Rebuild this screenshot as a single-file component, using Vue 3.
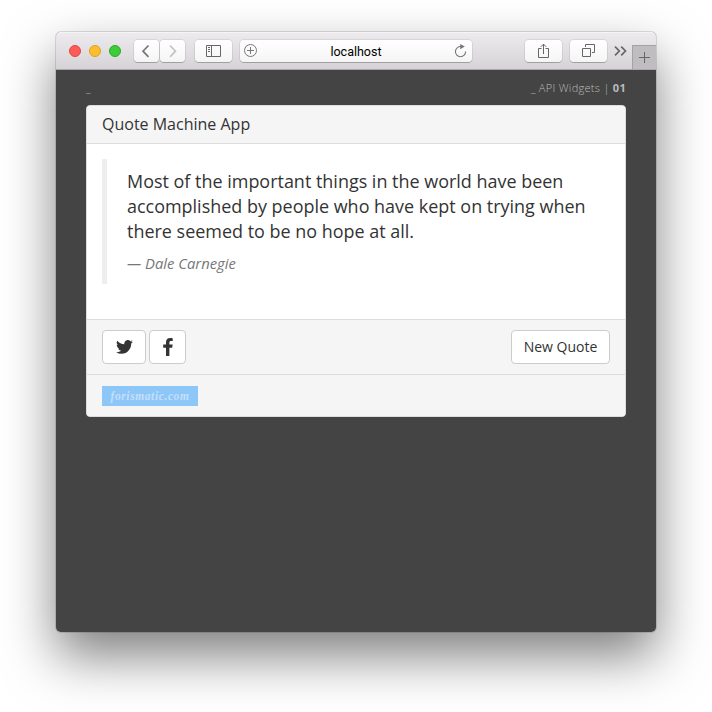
<script setup>
const lights = ['red', 'amber', 'green']
</script>

<template>
  <main class="desktop">
    <section class="window">
      <header class="toolbar">
        <div class="lights">
          <i v-for="c in lights" :key="c" :class="['light', c]"></i>
        </div>
        <div class="nav">
          <button class="tool half left">
            <svg width="25" height="22" viewBox="0 0 25 22"><path d="M14.500 5.500 9 11.200l5.500 5.700" fill="none" stroke="#777" stroke-width="1.700" /></svg>
          </button>
          <button class="tool half right">
            <svg width="25" height="22" viewBox="0 0 25 22"><path d="M10 5.500l5.500 5.700L10 16.900" fill="none" stroke="#c4c4c4" stroke-width="1.700" /></svg>
          </button>
        </div>
        <button class="tool sidebar">
          <svg width="15" height="12" viewBox="0 0 15 12" fill="none" stroke="#666"><path d="M.5.5h14v11H.5zM5.5.5v11M2 2.5h2M2 4.5h2M2 6.5h2" /></svg>
        </button>
        <div class="address">
          <svg width="13" height="13" viewBox="0 0 13 13" fill="none" stroke="#777"><circle cx="6.5" cy="6.5" r="6" /><path d="M3 6.5h7M6.5 3v7" /></svg>
          <span class="host">localhost</span>
          <svg width="13" height="14" viewBox="0 0 13 14" fill="none" stroke="#777" stroke-width="1.1"><path d="M7 2.6A5.1 5.1 0 1 0 11.6 7.5" /><path d="M6.2 0v5.2L10.8 2.6z" fill="#777" stroke="none" /></svg>
        </div>
        <button class="tool share">
          <svg width="11" height="16" viewBox="0 0 11 16" fill="none" stroke="#666"><path d="M3.500 5.500h-3v9h10v-9h-3M5.500 11V1M2.800 3.800 5.500 1.100l2.700 2.700" /></svg>
        </button>
        <button class="tool tabs">
          <svg width="13" height="13" viewBox="0 0 13 13" fill="none" stroke="#666"><path d="M.5 4.500h8v8h-8zM3.500 3V.5h9v8H10" /></svg>
        </button>
        <svg class="more" width="13" height="10" viewBox="0 0 13 10" fill="none" stroke="#666" stroke-width="1.700"><path d="m1 .7 4.300 4.300L1 9.300M7.200.7 11.500 5 7.200 9.300" /></svg>
        <div class="newtab">
          <svg width="11" height="11" viewBox="0 0 11 11" stroke="#666"><path d="M0 5.500h11M5.500 0v11" /></svg>
        </div>
      </header>

      <div class="page">
        <div class="crumbs">
          <span>_</span>
          <span>_ API Widgets | <b>01</b></span>
        </div>
        <article class="card">
          <h1 class="title">Quote Machine App</h1>
          <div class="body">
            <blockquote class="quote">
              <p>Most of the important things in the world have been accomplished by people who have kept on trying when there seemed to be no hope at all.</p>
              <cite>— Dale Carnegie</cite>
            </blockquote>
          </div>
          <div class="actions">
            <button class="btn twitter">
              <svg width="17" height="14" viewBox="0 0 24 20" fill="#333"><path d="M24 2.400a10 10 0 0 1-2.830.780A4.940 4.940 0 0 0 23.340.450a9.900 9.900 0 0 1-3.130 1.190 4.920 4.920 0 0 0-8.380 4.490A14 14 0 0 1 1.670.980a4.920 4.920 0 0 0 1.520 6.570 4.900 4.900 0 0 1-2.230-.610v.060a4.930 4.930 0 0 0 3.950 4.830 5 5 0 0 1-2.220.080 4.930 4.930 0 0 0 4.600 3.420A9.900 9.900 0 0 1 0 17.370a14 14 0 0 0 7.550 2.210c9.050 0 14-7.500 14-14v-.640A10 10 0 0 0 24 2.400z" /></svg>
            </button>
            <button class="btn facebook">
              <svg width="10" height="18" viewBox="0 0 10 18" fill="#333"><path d="M9.700.200v2.900H8c-1.300 0-1.600.600-1.600 1.500v2h3.200l-.400 3.100H6.400V18H3V9.700H.200V6.600H3V4.200C3 1.500 4.700 0 7.200 0c1.200 0 2.200.100 2.500.200z" /></svg>
            </button>
            <button class="btn new">New Quote</button>
          </div>
          <div class="source"><a class="badge">forismatic.com</a></div>
        </article>
      </div>
    </section>
  </main>
</template>

<style>
body {
  margin: 0;
  background: #fff;
}
</style>

<style scoped>
* {
  box-sizing: border-box;
}
.desktop {
  width: 712px;
  height: 712px;
  padding: 32px 56px 80px;
  overflow: hidden;
  background: #fff;
}
.window {
  width: 600px;
  height: 600px;
  border-radius: 5px;
  background: #444;
  box-shadow: 0 0 0 1px rgba(0, 0, 0, 0.12), 0 24px 52px rgba(0, 0, 0, 0.5);
  font-family: "Open Sans", sans-serif;
}
.toolbar {
  height: 38px;
  display: flex;
  align-items: center;
  padding-left: 13px;
  border-radius: 5px 5px 0 0;
  border-bottom: 1px solid #aaa8aa;
  background: linear-gradient(#edebed, #d5d3d5);
  box-shadow: inset 0 1px #f6f5f6;
}
.lights {
  display: flex;
  gap: 8px;
  margin-right: 13px;
}
.light {
  width: 12px;
  height: 12px;
  border-radius: 50%;
  border: 1px solid;
}
.red { background: #fc5b57; border-color: #e2463f; }
.amber { background: #fdbe2d; border-color: #dfa023; }
.green { background: #3ecc38; border-color: #27aa29; }
.nav {
  display: flex;
  gap: 1px;
  margin-right: 10px;
}
.tool {
  display: flex;
  align-items: center;
  justify-content: center;
  flex: none;
  width: 37px;
  height: 22px;
  margin: 0;
  padding: 0;
  border: 0;
  border-radius: 4px;
  background: linear-gradient(#fff, #f5f5f5);
  box-shadow: 0 0 0 1px rgba(0, 0, 0, 0.07), 0 1px 0 rgba(0, 0, 0, 0.2);
}
.half { width: 25px; }
.sidebar { margin-right: 8px; }
.address {
  width: 232px;
  height: 22px;
  flex: none;
  display: flex;
  align-items: center;
  justify-content: space-between;
  padding: 0 5px 0 4px;
  margin-right: 53px;
  border-radius: 4px;
  background: linear-gradient(#fff, #f5f5f5);
  box-shadow: 0 0 0 1px rgba(0, 0, 0, 0.07), 0 1px 0 rgba(0, 0, 0, 0.2);
}
.host {
  font: 12.5px/20px Roboto, sans-serif;
  padding: 2px 0 0 1px;
  color: #000;
}
.share { margin-right: 8px; }
.more { margin: 0 5px 0 7px; flex: none; }
.newtab {
  width: 24px;
  height: 24px;
  flex: none;
  align-self: flex-end;
  display: flex;
  align-items: center;
  justify-content: center;
  border: solid #a4a2a4;
  border-width: 1px 0 0 1px;
  background: #bfbdbf;
}
.page {
  padding: 0 30px;
}
.crumbs {
  height: 35px;
  display: flex;
  justify-content: space-between;
  font-size: 11px;
  font-weight: 300;
  line-height: 36px;
  letter-spacing: 0.3px;
  color: #bbb;
}
.crumbs b { font-weight: 700; }
.card {
  height: 312px;
  border: 1px solid #ddd;
  border-radius: 4px;
  background: #fff;
  color: #333;
  overflow: hidden;
}
.title {
  margin: 0;
  height: 38px;
  padding: 0 15px;
  border-bottom: 1px solid #ddd;
  background: #f5f5f5;
  font-size: 16px;
  font-weight: 400;
  line-height: 37px;
}
.body {
  height: 175px;
  padding: 15px;
}
.quote {
  height: 125px;
  margin: 0;
  padding: 10px 20px;
  border-left: 5px solid #eee;
}
.quote p {
  margin: 0;
  font-size: 17.97px;
  line-height: 25px;
}
.quote cite {
  display: block;
  margin-top: 9px;
  font-size: 14.8px;
  line-height: 20px;
  color: #777;
}
.actions {
  height: 55px;
  display: flex;
  gap: 3px;
  padding: 10px 15px;
  border-top: 1px solid #ddd;
  background: #f5f5f5;
}
.btn {
  height: 34px;
  display: flex;
  align-items: center;
  justify-content: center;
  margin: 0;
  padding: 0;
  border: 1px solid #ccc;
  border-radius: 4px;
  background: #fff;
  color: #333;
  font: 14px/20px "Open Sans", sans-serif;
}
.twitter { width: 44px; }
.facebook { width: 37px; }
.new { width: 99px; margin-left: auto; }
.source {
  height: 43px;
  padding: 11px 15px;
  border-top: 1px solid #ddd;
  background: #f5f5f5;
}
.badge {
  display: block;
  width: 96px;
  height: 20px;
  background: #8dc7f8;
  color: #c4dffa;
  font: italic bold 11.5px/20px "Liberation Serif", Georgia, serif;
  letter-spacing: 0.6px;
  text-align: center;
}
</style>
